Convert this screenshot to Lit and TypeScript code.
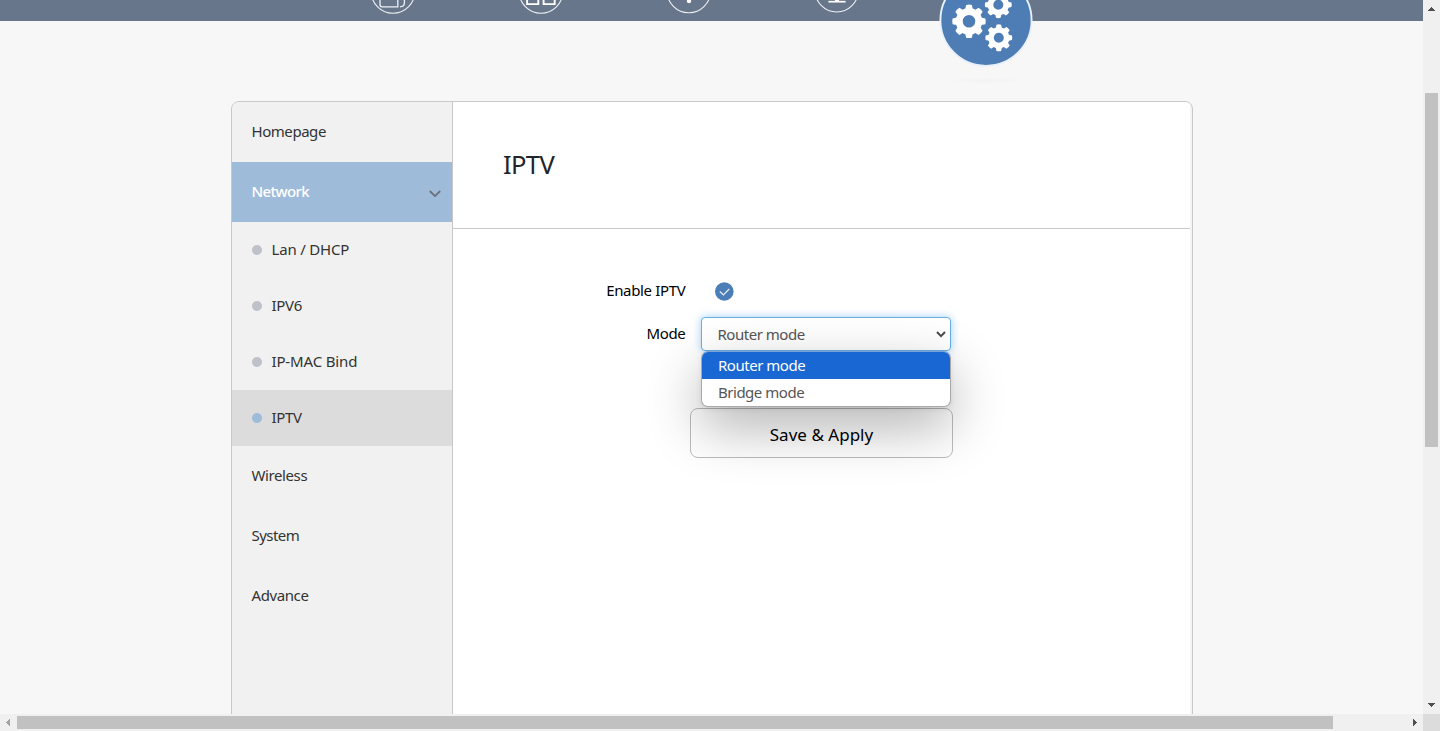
import { LitElement, html, svg, css } from "lit";
import { customElement, property } from "lit/decorators.js";
import { classMap } from "lit/directives/class-map.js";

const gear = (cx: number, cy: number, scale: number) => svg`
  <g transform="translate(${cx} ${cy}) scale(${scale})">
    ${[0, 45, 90, 135, 180, 225, 270, 315].map(
      (a) => svg`<path transform="rotate(${a})" d="M-4 -11 L-2.9 -16.4 Q0 -17.2 2.9 -16.4 L4 -11Z" fill="#fff"/>`
    )}
    <circle r="9.8" fill="none" stroke="#fff" stroke-width="7"/>
  </g>`;

@customElement("top-nav")
export class TopNav extends LitElement {
  static styles = css`
    :host {
      display: flex;
      height: 21px;
      padding-left: 319px;
      background: #68768b;
      flex: none;
    }
    .item {
      width: 148px;
      height: 21px;
      overflow: hidden;
    }
    .current {
      height: 90px;
      flex: none;
    }
    svg {
      display: block;
    }
  `;
  render() {
    return html`
      <svg class="item" viewBox="0 0 148 21" fill="none" stroke="#eef1f5">
        <circle cx="74" cy="-8.5" r="21.8" stroke-width="1.1" />
        <path d="M61 -4V4.5Q61 6.8 63.3 6.8H78.8V-4" stroke-width="1.3" />
        <path d="M81 6.8Q85.4 6.6 85.4 3V-4" stroke-width="1.3" />
      </svg>
      <svg class="item" viewBox="0 0 148 21" fill="none" stroke="#eef1f5">
        <circle cx="74" cy="-8.5" r="21.8" stroke-width="1.1" />
        <path d="M60.1 -6V4.1H71.3V-6M76.6 -6V4.1H87.7V-6" stroke="#fff" stroke-width="1.9" />
      </svg>
      <svg class="item" viewBox="0 0 148 21" fill="none" stroke="#eef1f5">
        <circle cx="73.8" cy="-9.1" r="21.8" stroke-width="1.1" />
        <circle cx="74" cy="1.2" r="2.1" fill="#fff" stroke="none" />
      </svg>
      <svg class="item" viewBox="0 0 148 21" fill="none" stroke="#eef1f5">
        <circle cx="73.7" cy="-9.6" r="21.6" stroke-width="1.1" />
        <path d="M65.4 1.7H82.6" stroke="#fff" stroke-width="1.7" />
        <path d="M74 -4V1.5" stroke="#fff" stroke-width="4" />
      </svg>
      <svg class="item current" viewBox="0 0 148 90">
        <defs>
          <radialGradient id="s">
            <stop offset="0" stop-color="#000" stop-opacity=".02" />
            <stop offset="1" stop-color="#000" stop-opacity="0" />
          </radialGradient>
        </defs>
        <path d="M32 79Q75 76 118 79Q75 88 32 79Z" fill="url(#s)" />
        <circle cx="75" cy="20.3" r="45.6" fill="#4e7db5" stroke="#e8f1fb" stroke-width="1.9" />
        ${gear(58, 21.3, 1)} ${gear(87.3, 4.7, 0.8)} ${gear(87.8, 37.8, 0.8)}
      </svg>
    `;
  }
}

@customElement("side-menu")
export class SideMenu extends LitElement {
  static styles = css`
    :host {
      display: flex;
      flex-direction: column;
      width: 220px;
      background: #f1f1f1;
      border-right: 1px solid #c8c8c8;
      flex: none;
    }
    .item {
      box-sizing: border-box;
      height: 60px;
      padding: 0 11px 2px 19.5px;
      display: flex;
      align-items: center;
      justify-content: space-between;
      color: #333;
    }
    .open {
      background: #9fbbda;
      color: #fff;
      font-weight: 500;
    }
    .sub {
      box-sizing: border-box;
      height: 56px;
      padding: 0 0 2px 20px;
      display: flex;
      align-items: center;
      gap: 9.5px;
      color: #333;
    }
    .dot {
      width: 10px;
      height: 10px;
      margin-top: 2px;
      border-radius: 50%;
      background: #bfc1c9;
    }
    .active {
      background: #dcdcdc;
    }
    .active .dot {
      background: #9fbbda;
    }
    .chevron {
      margin-top: 5px;
    }
  `;
  render() {
    const subs: [string, string][] = [
      ["Lan / DHCP", "-0.2px"],
      ["IPV6", "-0.3px"],
      ["IP-MAC Bind", "-0.15px"],
      ["IPTV", "-0.3px"],
    ];
    const rest: [string, string][] = [
      ["Wireless", "-0.4px"],
      ["System", "-0.55px"],
      ["Advance", "-0.4px"],
    ];
    return html`
      <div class="item"><span style="letter-spacing:-0.45px">Homepage</span></div>
      <div class="item open">
        <span style="letter-spacing:-0.65px">Network</span>
        <svg class="chevron" width="12" height="8" viewBox="0 0 12 8" fill="none" stroke="#6b7079" stroke-width="1.8">
          <path d="M0.8 1L6 6.1L11.2 1" />
        </svg>
      </div>
      ${subs.map(
        ([t, ls]) => html`<div class=${classMap({ sub: true, active: t === "IPTV" })}>
          <i class="dot"></i><span style="letter-spacing:${ls}">${t}</span>
        </div>`
      )}
      ${rest.map(([t, ls]) => html`<div class="item"><span style="letter-spacing:${ls}">${t}</span></div>`)}
    `;
  }
}

@customElement("iptv-form")
export class IptvForm extends LitElement {
  static styles = css`
    :host {
      display: block;
      width: 737px;
      background: #fff;
      color: #000;
    }
    .head {
      box-sizing: border-box;
      height: 127px;
      border-bottom: 1px solid #c8c8c8;
      padding: 0 0 2px 50px;
      display: flex;
      align-items: center;
    }
    .title {
      font-size: 25.5px;
      font-weight: 400;
      margin: 0;
      color: #212529;
      letter-spacing: -0.6px;
    }
    .row {
      display: flex;
      align-items: center;
    }
    .enable {
      height: 36px;
      padding-top: 44px;
    }
    .mode {
      height: 34px;
      margin-top: 8px;
    }
    .label {
      width: 232.5px;
      padding-bottom: 2px;
      text-align: right;
      letter-spacing: -0.33px;
    }
    .check {
      margin-left: 29.5px;
      margin-top: 1px;
    }
    .field {
      position: relative;
      margin-left: 15.5px;
      width: 250px;
      height: 34px;
      letter-spacing: -0.48px;
      color: #555;
    }
    .select {
      box-sizing: border-box;
      height: 34px;
      border: 1px solid #66afe9;
      border-radius: 4px;
      box-shadow: 0 0 8px rgba(102, 175, 233, 0.6);
      padding: 0 4px 0 15.5px;
      display: flex;
      align-items: center;
      justify-content: space-between;
      background: #fff;
    }
    .popup {
      position: absolute;
      top: 34px;
      left: 0;
      right: 0;
      box-sizing: border-box;
      height: 56px;
      border: 1px solid #a9a9a9;
      border-top-color: #7da3d6;
      border-radius: 7px;
      overflow: hidden;
      background: #fff;
      box-shadow: 0 20px 54px rgba(0, 0, 0, 0.31), 0 2px 6px rgba(0, 0, 0, 0.08);
    }
    .option {
      box-sizing: border-box;
      height: 27px;
      padding: 0 0 2px 16px;
      display: flex;
      align-items: center;
    }
    .chosen {
      background: #1967d2;
      color: #fff;
    }
    .save {
      box-sizing: border-box;
      display: flex;
      align-items: center;
      justify-content: center;
      width: 263px;
      height: 50px;
      margin: 57px 0 0 237px;
      padding-top: 3px;
      border: 1px solid #bcbcbc;
      border-radius: 8px;
      font-size: 17px;
    }
    .caption {
      letter-spacing: 0.02px;
    }
  `;
  render() {
    return html`
      <div class="head"><h1 class="title">IPTV</h1></div>
      <div class="row enable">
        <span class="label">Enable IPTV</span>
        <svg class="check" width="19" height="19" viewBox="0 0 19 19">
          <circle cx="9.3" cy="9.5" r="9.3" fill="#4b7db6" />
          <path d="M4.8 9.5L8.4 13L14.2 7" fill="none" stroke="#e6eef6" stroke-width="1.2" />
        </svg>
      </div>
      <div class="row mode">
        <span class="label">Mode</span>
        <div class="field">
          <div class="select">
            <span>Router mode</span>
            <svg width="10" height="8" viewBox="0 0 10 8" fill="none" stroke="#4a4a4a" stroke-width="2">
              <path d="M1 2L5 6.1L9 2" />
            </svg>
          </div>
          <div class="popup">
            <div class="option chosen">Router mode</div>
            <div class="option">Bridge mode</div>
          </div>
        </div>
      </div>
      <div class="save"><span class="caption">Save &amp; Apply</span></div>
    `;
  }
}

@customElement("scroll-bar")
export class ScrollBar extends LitElement {
  @property({ type: Boolean, reflect: true }) horizontal = false;
  static styles = css`
    :host {
      display: flex;
      flex-direction: column;
      background: #f0f0f0;
    }
    :host([horizontal]) {
      flex-direction: row;
    }
    .arrow {
      width: 17px;
      height: 17px;
      flex: none;
      display: block;
    }
    .track {
      flex: 1;
      padding: 76px 2px 0;
    }
    .thumb {
      height: 354px;
      background: #c1c1c1;
    }
    .track.h {
      padding: 2px 0;
    }
    .h .thumb {
      width: 1316px;
      height: 13px;
    }
  `;
  render() {
    return this.horizontal
      ? html`<svg class="arrow" viewBox="0 0 17 17" shape-rendering="crispEdges">
            <path d="M10 5V12L6 8.5Z" fill="#a3a3a3" />
          </svg>
          <div class="track h"><div class="thumb"></div></div>
          <svg class="arrow" viewBox="0 0 17 17" shape-rendering="crispEdges">
            <path d="M7 5V12L11 8.5Z" fill="#505050" />
          </svg>`
      : html`<svg class="arrow" viewBox="0 0 17 17" shape-rendering="crispEdges">
            <path d="M5 11H12L8.5 7Z" fill="#505050" />
          </svg>
          <div class="track"><div class="thumb"></div></div>
          <svg class="arrow" viewBox="0 0 17 17" shape-rendering="crispEdges">
            <path d="M5 6H12L8.5 10Z" fill="#505050" />
          </svg>`;
  }
}

@customElement("app-root")
export class AppRoot extends LitElement {
  static styles = css`
    :host {
      display: grid;
      grid-template: 714px 17px / 1423px 17px;
      width: 1440px;
      height: 731px;
      overflow: hidden;
      font: 15px/20px "Noto Sans", "Open Sans", sans-serif;
    }
    .page {
      background: #f7f7f7;
      overflow: hidden;
    }
    .panel {
      box-sizing: border-box;
      width: 962px;
      height: 800px;
      margin: 80px 0 0 231px;
      border: 1px solid #c8c8c8;
      border-radius: 8px;
      overflow: hidden;
      display: flex;
      background: #f4f4f4;
    }
    .corner {
      background: #dcdcdc;
    }
  `;
  render() {
    return html`
      <div class="page">
        <top-nav></top-nav>
        <div class="panel">
          <side-menu></side-menu>
          <iptv-form></iptv-form>
        </div>
      </div>
      <scroll-bar></scroll-bar>
      <scroll-bar horizontal></scroll-bar>
      <div class="corner"></div>
    `;
  }
}
